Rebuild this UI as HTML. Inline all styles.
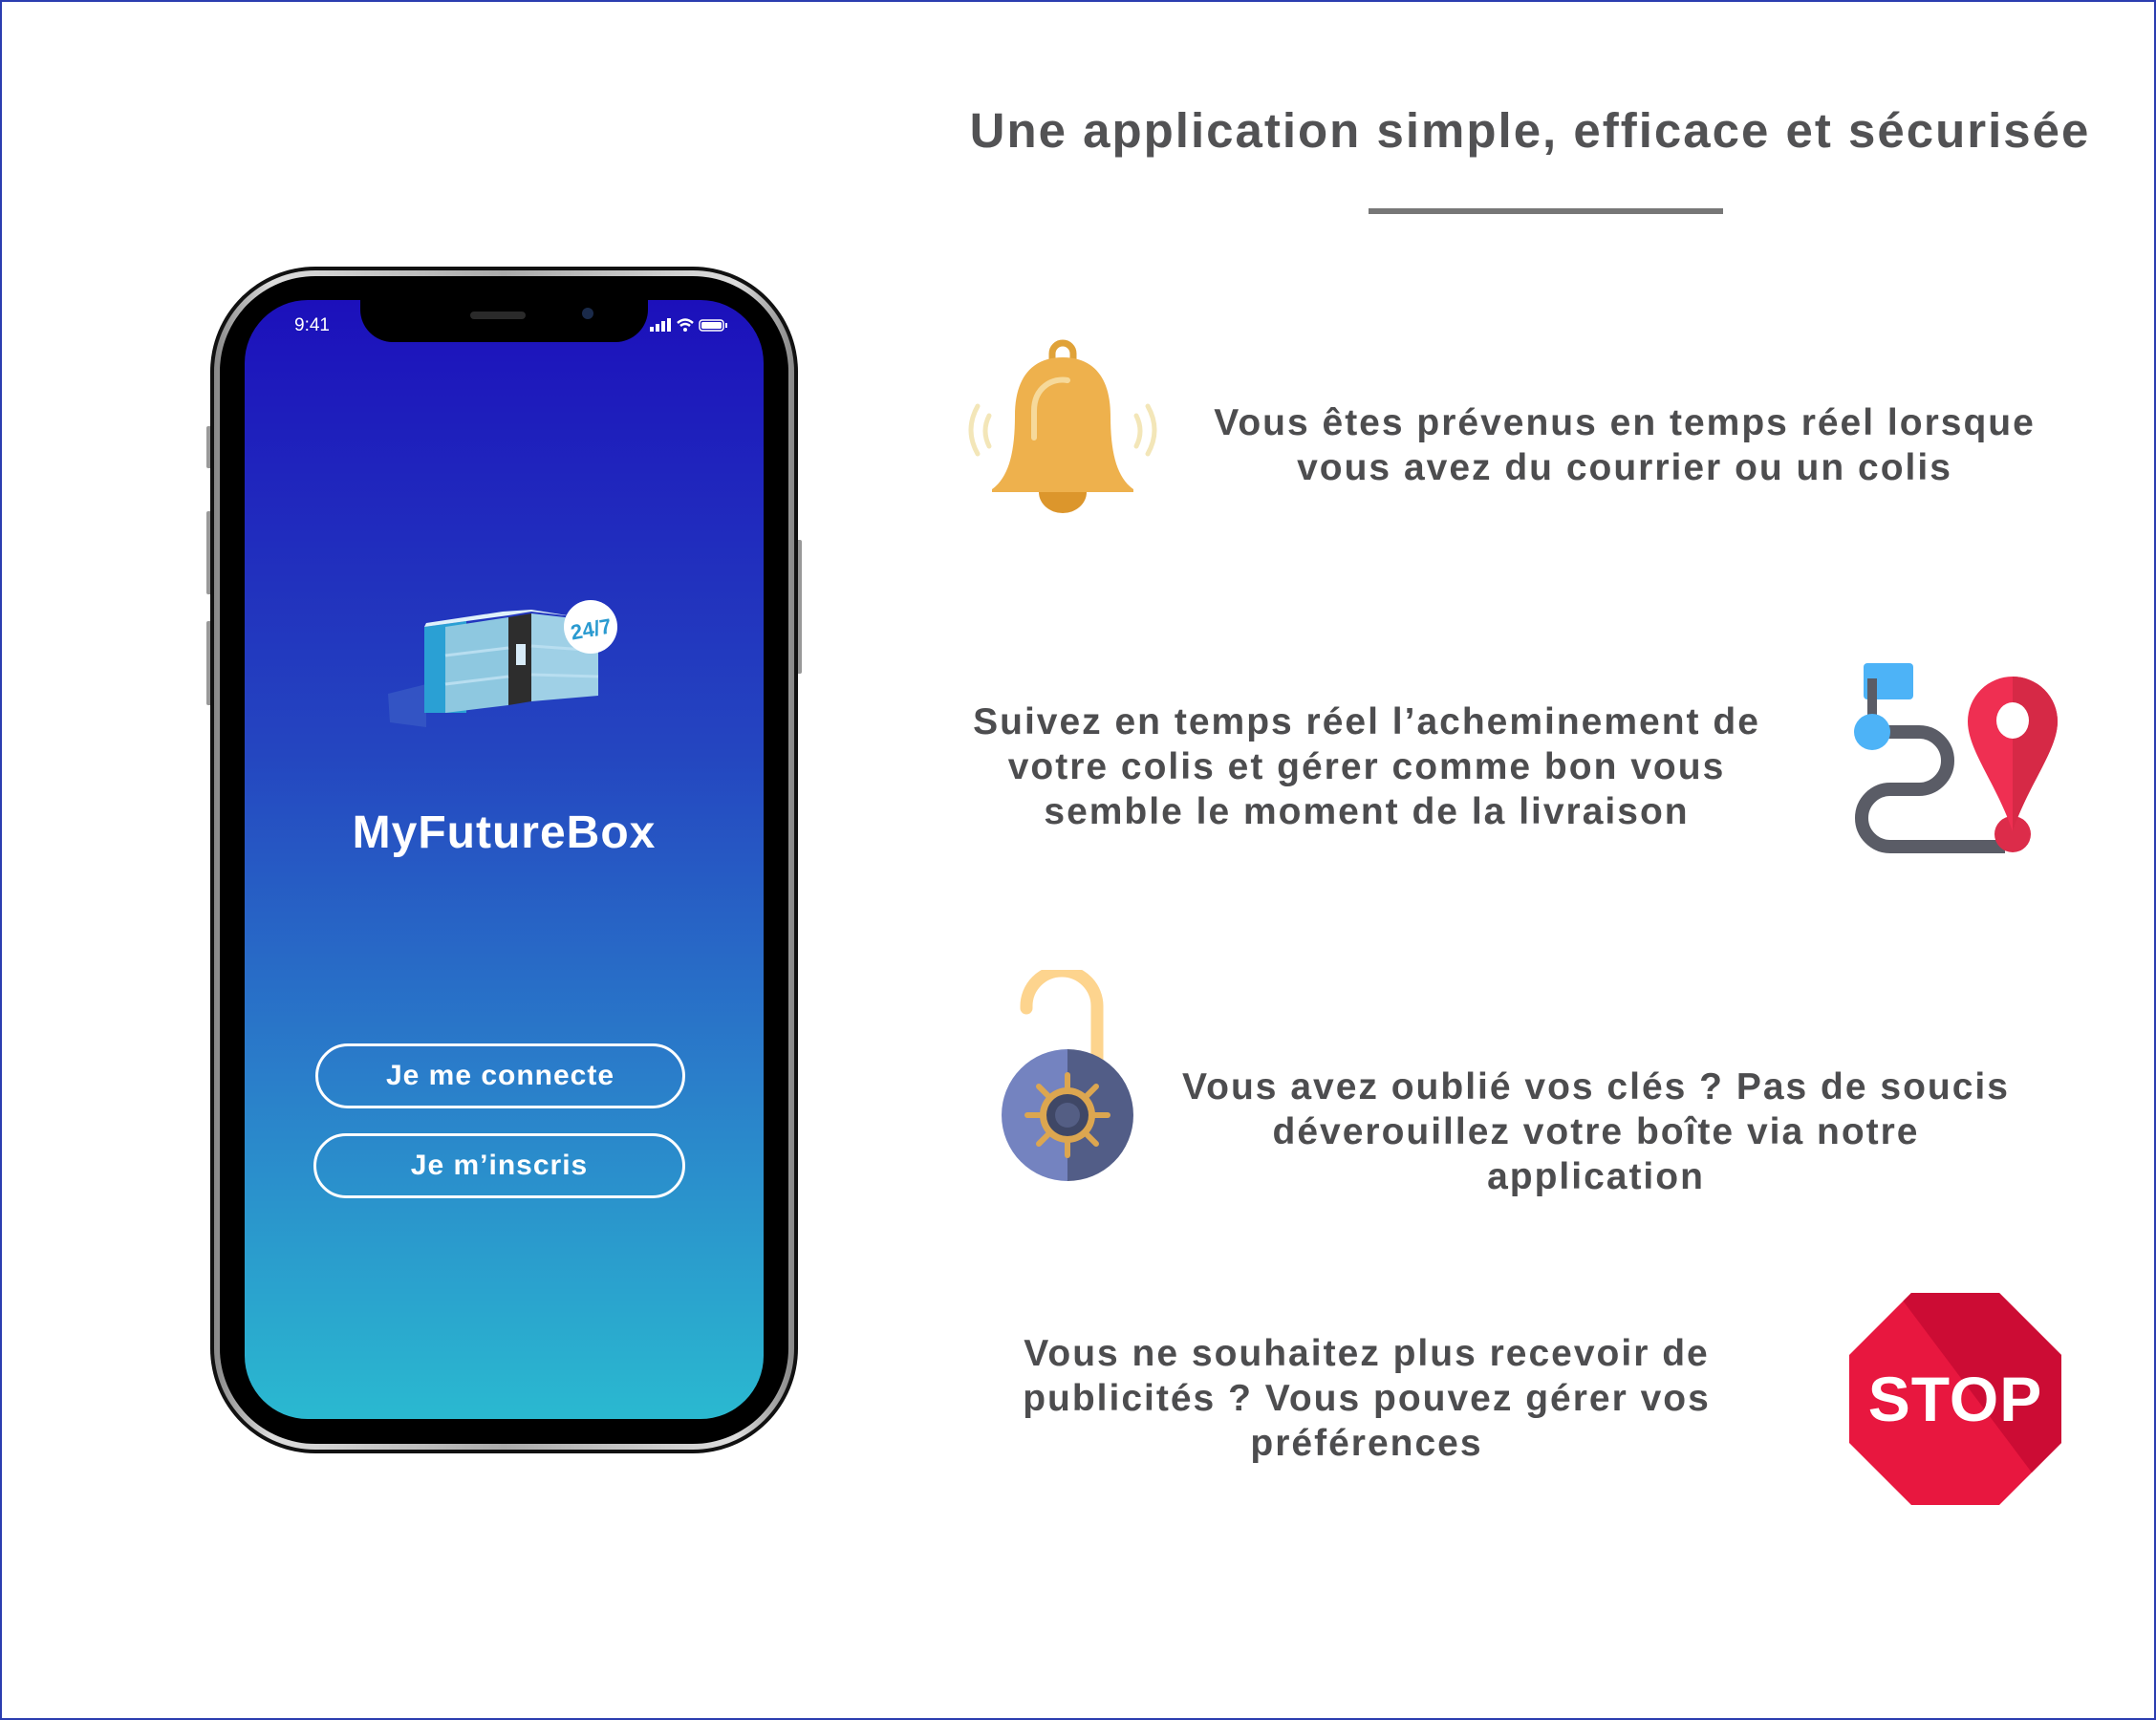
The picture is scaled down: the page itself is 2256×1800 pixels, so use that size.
<!DOCTYPE html>
<html><head><meta charset="utf-8"><style>
*{margin:0;padding:0;box-sizing:border-box}
body{width:2256px;height:1800px;background:#fff;position:relative;overflow:hidden;font-family:"Liberation Sans","DejaVu Sans",sans-serif}
.frame{position:absolute;left:0;top:0;width:2256px;height:1800px;border:2px solid #2b3db0}
.t{position:absolute;color:#4d4d4f;text-align:center;font-weight:bold;font-size:39px;line-height:47px;letter-spacing:2px;white-space:nowrap}
.abs{position:absolute}
.btn{position:absolute;left:330px;width:387px;height:68px;border:3px solid #fff;border-radius:34px;color:#fff;font-weight:bold;font-size:30px;line-height:62px;text-align:center;letter-spacing:1px}
</style></head><body>
<div class="frame"></div>
<div class="t" style="left:1012px;width:1178px;top:104px;font-size:51px;line-height:66px;color:#525254;letter-spacing:2px">Une application simple, efficace et sécurisée</div>
<div class="abs" style="left:1432px;top:218px;width:371px;height:6px;background:#777"></div>

<!-- phone -->
<div class="abs" style="left:216px;top:446px;width:8px;height:44px;background:#999;border-radius:2px"></div>
<div class="abs" style="left:216px;top:535px;width:8px;height:87px;background:#999;border-radius:2px"></div>
<div class="abs" style="left:216px;top:650px;width:8px;height:88px;background:#999;border-radius:2px"></div>
<div class="abs" style="left:831px;top:565px;width:8px;height:140px;background:#999;border-radius:2px"></div>
<div class="abs" style="left:220px;top:279px;width:615px;height:1242px;border-radius:110px;background:#111;padding:4px">
 <div style="width:100%;height:100%;border-radius:106px;background:linear-gradient(90deg,#888,#ddd 10%,#aaa 50%,#ddd 90%,#888);padding:6px">
  <div style="width:100%;height:100%;border-radius:100px;background:#000"></div>
 </div>
</div>
<div class="abs" style="left:256px;top:314px;width:543px;height:1171px;border-radius:66px;background:linear-gradient(180deg,#1c10bb 0%,#2445c0 40%,#2a7fca 70%,#2ab9d0 100%);overflow:hidden">
 <div class="abs" style="left:121px;top:-2px;width:301px;height:46px;background:#000;border-radius:0 0 34px 34px"></div>
 <div class="abs" style="left:236px;top:12px;width:58px;height:8px;background:#2a2a2a;border-radius:4px"></div>
 <div class="abs" style="left:353px;top:8px;width:12px;height:12px;background:#1a2a4a;border-radius:6px"></div>
 <div class="abs" style="left:52px;top:16px;color:#fff;font-size:19px">9:41</div>
 <svg class="abs" style="left:424px;top:18px" width="100" height="20">
  <rect x="0" y="10" width="4" height="5" fill="#fff"/><rect x="6" y="7" width="4" height="8" fill="#fff"/><rect x="12" y="4" width="4" height="11" fill="#fff"/><rect x="18" y="1" width="4" height="14" fill="#fff"/>
  <path d="M29 6 Q37 -1 45 6 M32 9 Q37 5 42 9" stroke="#fff" stroke-width="2.5" fill="none"/><circle cx="37" cy="13" r="2" fill="#fff"/>
  <rect x="52" y="3" width="25" height="11" rx="3" stroke="#fff" stroke-width="1.5" fill="none"/><rect x="54" y="5" width="21" height="7" rx="1.5" fill="#fff"/><rect x="79" y="6" width="2" height="5" fill="#fff"/>
 </svg>
 <!-- logo -->
 <svg class="abs" style="left:150px;top:312px" width="250" height="170">
  <polygon points="0,100 40,90 40,135 2,130" fill="#3a5cc6" opacity=".7"/>
  <polygon points="38,30 82,24 82,120 38,120" fill="#2aa0d4"/>
  <polygon points="60,30 126,20 126,112 60,120" fill="#8ec8e0"/>
  <polygon points="126,20 150,16 150,108 126,112" fill="#2d2d2d"/>
  <rect x="134" y="48" width="10" height="22" fill="#d8ecf8"/>
  <polygon points="150,16 220,24 220,102 150,108" fill="#9fd0e6"/>
  <polygon points="38,30 126,18 150,14 220,22 200,20 150,12 120,14 40,26" fill="#dff1fa"/>
  <g stroke="#b8def0" stroke-width="3"><line x1="60" y1="60" x2="126" y2="52"/><line x1="60" y1="90" x2="126" y2="82"/><line x1="150" y1="50" x2="220" y2="55"/><line x1="150" y1="80" x2="220" y2="82"/></g>
  <circle cx="212" cy="30" r="28" fill="#fff"/>
  <text x="212" y="40" font-size="22" font-weight="bold" fill="#2a9ad0" text-anchor="middle" font-family="Liberation Sans" transform="rotate(-10 212 30)">24/7</text>
 </svg>
 <div class="abs" style="left:0;width:543px;top:530px;text-align:center;color:#fff;font-weight:bold;font-size:48px;letter-spacing:1px">MyFutureBox</div>
</div>
<div class="btn" style="top:1092px">Je me connecte</div>
<div class="btn" style="top:1186px;left:328px;width:389px">Je m’inscris</div>

<!-- bell -->
<svg class="abs" style="left:1005px;top:350px" width="210" height="190">
 <path d="M96 30 V20 a11 11 0 0 1 22 0 V30" stroke="#e0a238" stroke-width="7" fill="none"/>
 <path d="M107 24 C75 24 57 45 57 85 C57 125 50 150 33 162 L33 165 L181 165 L181 162 C164 150 157 125 157 85 C157 45 139 24 107 24Z" fill="#eeb14d"/>
 <path d="M77 108 V80 C77 55 97 45 112 48" stroke="#f6d99a" stroke-width="6" fill="none" stroke-linecap="round"/>
 <path d="M82 165 a25 22 0 0 0 50 0 Z" fill="#dc962c"/>
 <g stroke="#f3e6b8" stroke-width="5" fill="none" stroke-linecap="round">
  <path d="M18 75 Q4 100 18 125"/><path d="M30 85 Q22 101 30 117"/>
  <path d="M196 75 Q210 100 196 125"/><path d="M184 85 Q192 101 184 117"/></g>
</svg>
<div class="t" style="left:1200px;width:1000px;top:419px">Vous êtes prévenus en temps réel lorsque<br>vous avez du courrier ou un colis</div>

<!-- route -->
<svg class="abs" style="left:1930px;top:690px" width="230" height="210">
 <rect x="20" y="4" width="52" height="38" rx="4" fill="#4db3f7"/>
 <rect x="24" y="20" width="10" height="55" fill="#5a5c66"/>
 <path d="M29 86 H78 a30 30 0 0 1 0 60 H48 a30 30 0 0 0 0 60 H168" stroke="#5a5c66" stroke-width="14" fill="none" transform="translate(0,-10)"/>
 <circle cx="29" cy="76" r="19" fill="#4db3f7"/>
 <circle cx="176" cy="183" r="19" fill="#dc2c4a"/>
 <path d="M176 18 a47 47 0 0 1 47 47 c0 30 -30 65 -47 115 c-17 -50 -47 -85 -47 -115 a47 47 0 0 1 47 -47Z" fill="#ef2f52"/>
 <path d="M176 18 a47 47 0 0 1 47 47 c0 30 -30 65 -47 115Z" fill="#d62946"/>
 <ellipse cx="176" cy="64" rx="17" ry="19" fill="#fff"/>
</svg>
<div class="t" style="left:930px;width:1000px;top:732px">Suivez en temps réel l’acheminement de<br>votre colis et gérer comme bon vous<br>semble le moment de la livraison</div>

<!-- lock -->
<svg class="abs" style="left:1040px;top:1015px" width="160" height="225">
 <path d="M34 40 V38 a37 37 0 0 1 74 0 V105" stroke="#fdd48e" stroke-width="13" fill="none" stroke-linecap="round"/>
 <path d="M77 83 a69 69 0 0 0 0 138 Z" fill="#7483c0"/>
 <path d="M77 83 a69 69 0 0 1 0 138 Z" fill="#525d87"/>
 <g stroke="#dca650" stroke-width="6" stroke-linecap="round">
  <line x1="77" y1="110" x2="77" y2="194"/><line x1="35" y1="152" x2="119" y2="152"/>
  <line x1="47" y1="122" x2="107" y2="182"/><line x1="107" y1="122" x2="47" y2="182"/></g>
 <circle cx="77" cy="152" r="29" fill="#dca650"/>
 <circle cx="77" cy="152" r="22" fill="#3f4766"/>
 <circle cx="77" cy="152" r="13" fill="#545e84"/>
</svg>
<div class="t" style="left:1170px;width:1000px;top:1114px">Vous avez oublié vos clés ? Pas de soucis<br>déverouillez votre boîte via notre<br>application</div>

<!-- stop -->
<svg class="abs" style="left:1935px;top:1353px" width="222" height="222">
 <defs><clipPath id="oc"><polygon points="65,0 157,0 222,65 222,157 157,222 65,222 0,157 0,65"/></clipPath></defs>
 <g clip-path="url(#oc)">
  <rect width="222" height="222" fill="#e8173f"/>
  <polygon points="50,0 222,0 222,170 200,200" fill="#cc0c34"/>
 </g>
 <text x="111" y="134" font-size="66" font-weight="bold" fill="#fff" text-anchor="middle" font-family="Liberation Sans" letter-spacing="1">STOP</text>
</svg>
<div class="t" style="left:930px;width:1000px;top:1393px">Vous ne souhaitez plus recevoir de<br>publicités ? Vous pouvez gérer vos<br>préférences</div>
</body></html>
